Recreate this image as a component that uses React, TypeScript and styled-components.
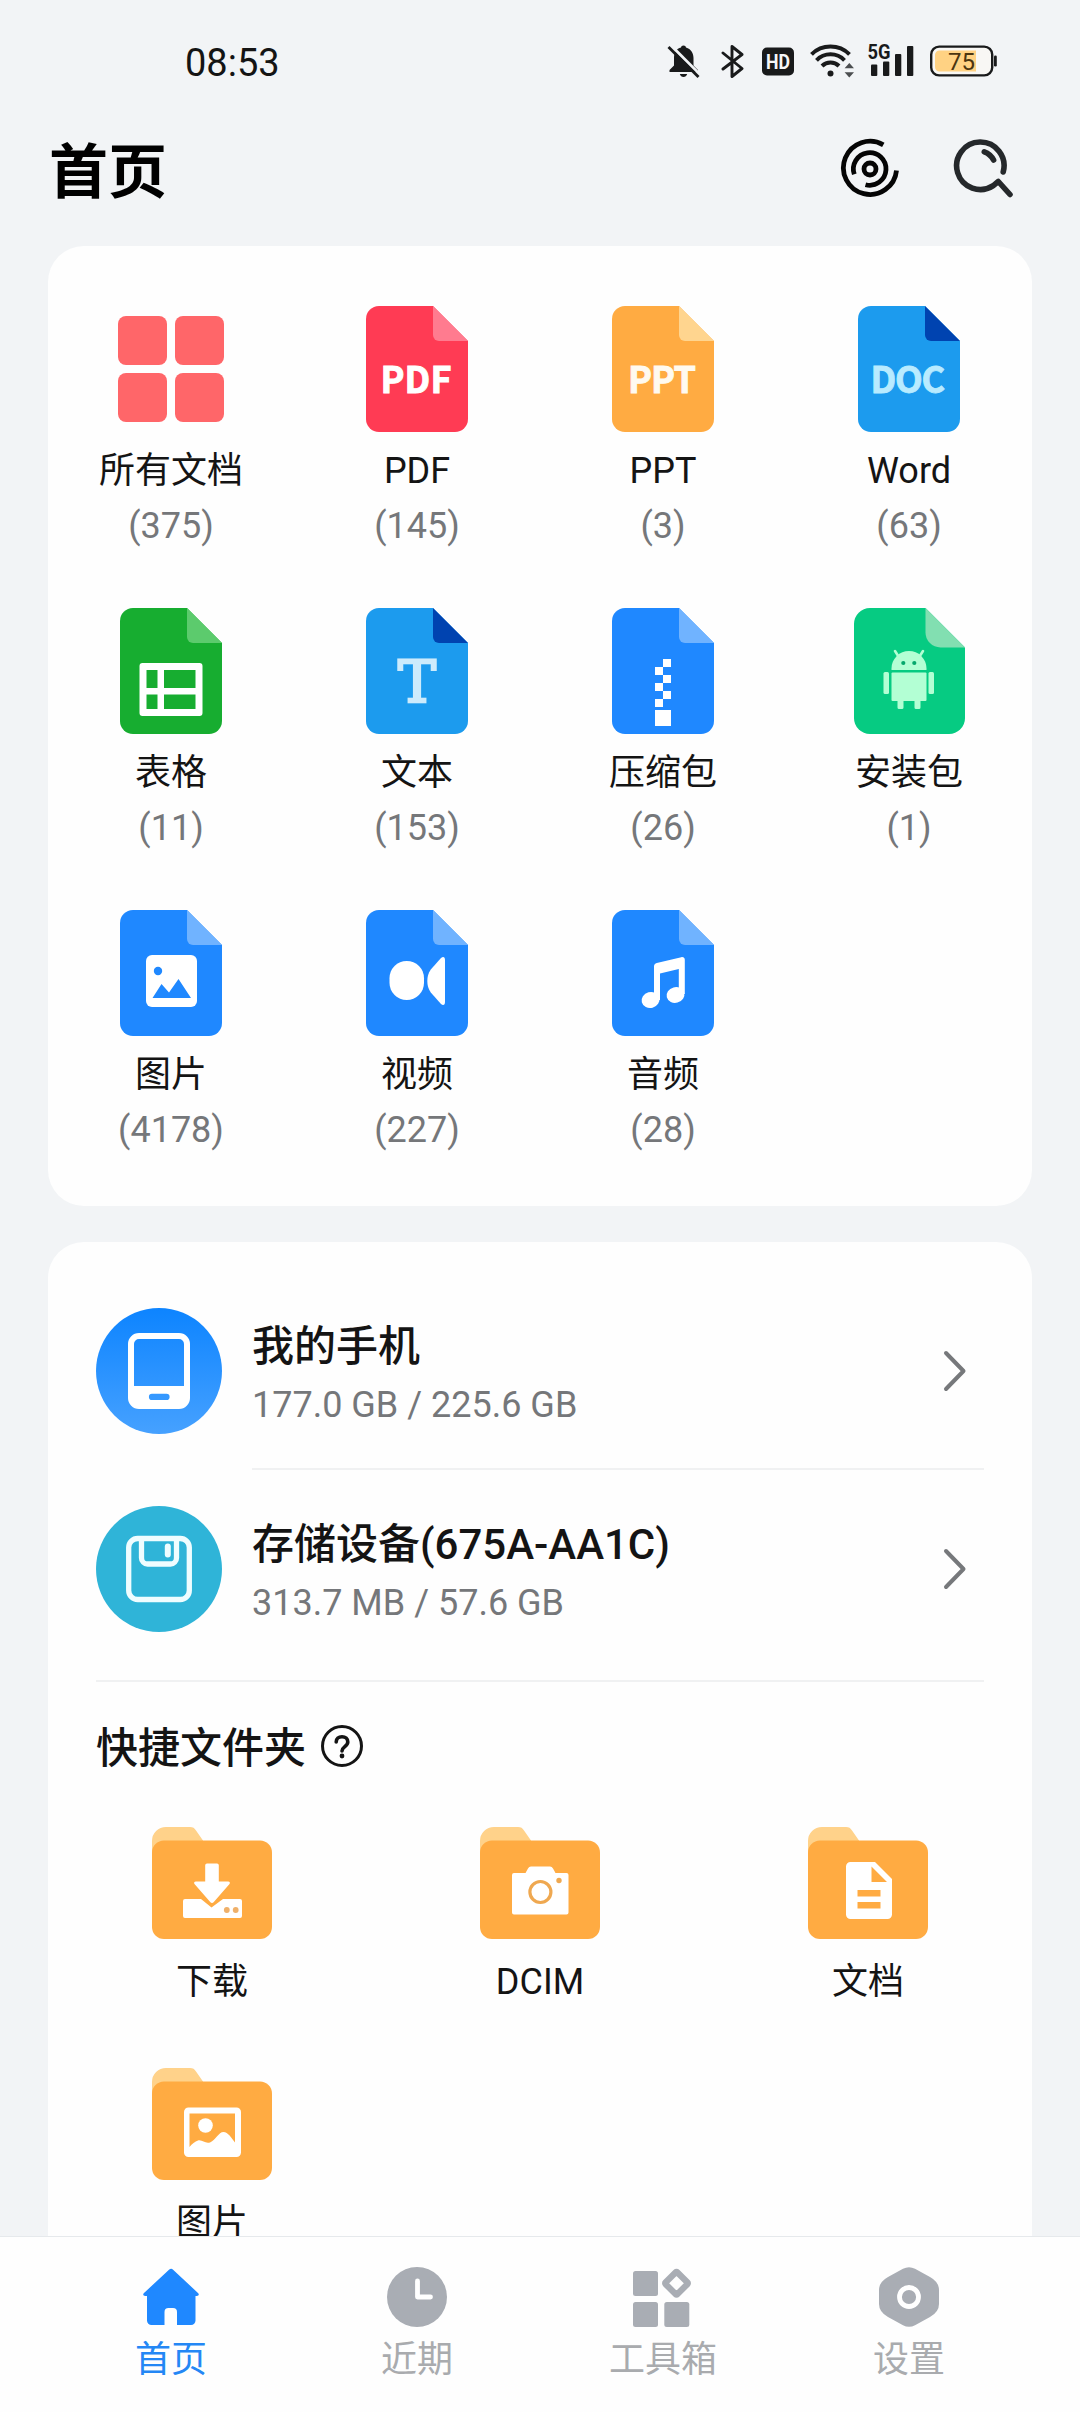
import React from 'react';
import styled, { createGlobalStyle } from 'styled-components';

const GlobalStyle = createGlobalStyle`
  * { box-sizing: border-box; }
  body {
    margin: 0;
    background: #f2f4f6;
    font-family: Roboto, "Noto Sans CJK SC", sans-serif;
    color: #141414;
  }
  svg { display: block; flex: none; }
`;

const CJK_SANS = '"Noto Sans CJK SC", sans-serif';

const Screen = styled.div`
  width: 1080px;
  height: 2412px;
  display: flex;
  flex-direction: column;
  overflow: hidden;
  background: #f2f4f6;
`;

const Content = styled.main`
  flex: 1;
  min-height: 0;
  overflow: hidden;
`;

const StatusBar = styled.div`
  height: 120px;
  display: flex;
  justify-content: space-between;
  align-items: center;
  padding: 0 82px 0 185px;
`;

const Clock = styled.span`
  font-size: 38px;
  line-height: 44px;
  padding-top: 5px;
`;

const StatusIcons = styled.div`
  display: flex;
  align-items: center;
  padding-top: 2px;
`;

const StatusIcon = styled.svg<{ $before?: number }>`
  margin-left: ${(p) => p.$before ?? 0}px;
`;

const Header = styled.header`
  height: 126px;
  display: flex;
  justify-content: space-between;
  align-items: flex-start;
  padding: 17px 67px 0 49px;
`;

const Title = styled.h1`
  margin: 0;
  padding-top: 2px;
  font-size: 59px;
  line-height: 68px;
  font-weight: 700;
  color: #000;
`;

const HeaderActions = styled.div`
  display: flex;
  gap: 51px;
  padding-top: 1px;
`;

const Card = styled.section`
  margin: 0 48px;
  background: #fefefe;
  border-radius: 36px;
`;

const CategoryCard = styled(Card)`
  height: 960px;
  padding-top: 60px;
  display: grid;
  grid-template-columns: repeat(4, 1fr);
  grid-auto-rows: 240px;
  row-gap: 62px;
`;

const Cell = styled.div`
  display: flex;
  flex-direction: column;
  align-items: center;
`;

const Label = styled.span<{ $gap?: number }>`
  margin-top: ${(p) => p.$gap ?? 18}px;
  font-size: 36px;
  line-height: 42px;
  white-space: nowrap;
`;

const Count = styled.span`
  margin-top: 13px;
  font-size: 36px;
  line-height: 42px;
  color: #75777a;
`;

const StorageCard = styled(Card)`
  margin-top: 36px;
  padding: 30px 48px 0;
  height: 1200px;
`;

const StorageRow = styled.div`
  height: 198px;
  display: flex;
  align-items: center;
  gap: 30px;
`;

const StorageBody = styled.div<{ $divided?: boolean }>`
  flex: 1;
  height: 198px;
  display: flex;
  align-items: center;
  justify-content: space-between;
  padding: 2px 16px 0 0;
  border-bottom: 2px solid ${(p) => (p.$divided ? '#f0f1f2' : 'transparent')};
`;

const StorageText = styled.div`
  display: flex;
  flex-direction: column;
  gap: 13px;
  padding-top: 6px;
`;

const StorageName = styled.span`
  font-size: 42px;
  line-height: 48px;
  font-weight: 500;
`;

const StorageSize = styled.span`
  font-size: 36px;
  line-height: 42px;
  color: #75777a;
`;

const Divider = styled.div`
  height: 2px;
  margin-top: 12px;
  background: #f0f1f2;
`;

const SectionTitle = styled.div`
  margin-top: 40px;
  height: 48px;
  display: flex;
  align-items: center;
  gap: 15px;
`;

const SectionName = styled.span`
  padding-top: 5px;
  font-size: 42px;
  line-height: 48px;
  font-weight: 500;
`;

const FolderGrid = styled.div`
  margin: 57px -48px 0;
  display: grid;
  grid-template-columns: repeat(3, 1fr);
  row-gap: 65px;
`;

const TabBar = styled.nav`
  height: 176px;
  border-top: 1px solid #e6e9ec;
  background: #fefefe;
  display: grid;
  grid-template-columns: repeat(4, 246px);
  justify-content: center;
  padding-top: 30px;
`;

const Tab = styled.div<{ $active?: boolean }>`
  display: flex;
  flex-direction: column;
  align-items: center;
  color: ${(p) => (p.$active ? '#2487f5' : '#a9abae')};
`;

/* ---------- file type icons ---------- */

type FileProps = { color: string; fold: string; children?: React.ReactNode };

const FileIcon = ({ color, fold, children }: FileProps) => (
  <svg width="102" height="126" viewBox="0 0 102 126">
    <path d="M13 0H67L102 35V113a13 13 0 0 1-13 13H13a13 13 0 0 1-13-13V13A13 13 0 0 1 13 0Z" fill={color} />
    <path d="M67 0L102 35H73a6 6 0 0 1-6-6Z" fill={fold} />
    {children}
  </svg>
);

const FileTag = styled.text`
  font-family: ${CJK_SANS};
  font-weight: 700;
  font-size: 36px;
  stroke: currentColor;
  stroke-width: 0.9px;
  fill: currentColor;
`;

const SlabLetter = styled.text`
  font-family: "DejaVu Serif", serif;
  font-size: 57px;
  text-anchor: middle;
`;

const TilesIcon = () => (
  <svg width="106" height="126" viewBox="0 0 106 126" fill="#ff6669">
    <rect x="0" y="10" width="49" height="49" rx="8" />
    <rect x="57" y="10" width="49" height="49" rx="8" />
    <rect x="0" y="67" width="49" height="49" rx="8" />
    <rect x="57" y="67" width="49" height="49" rx="8" />
  </svg>
);

const SheetIcon = () => (
  <FileIcon color="#17ad30" fold="#5ccb6d">
    <path
      fill="#fff"
      fillRule="evenodd"
      d="M22.500 55h57a3 3 0 0 1 3 3v47a3 3 0 0 1-3 3h-57a3 3 0 0 1-3-3V58a3 3 0 0 1 3-3ZM26.500 62v18H37.500V62ZM44 62v18H75.500V62ZM26.500 86.500v14.500H37.500V86.500ZM44 86.500v14.500H75.500V86.500Z"
    />
  </FileIcon>
);

const ZipIcon = () => (
  <FileIcon color="#1f88ff" fold="#70b3ff">
    <g fill="#fff">
      <rect x="51" y="51" width="8" height="8" />
      <rect x="43" y="59" width="8" height="8" />
      <rect x="51" y="67" width="8" height="8" />
      <rect x="43" y="75" width="8" height="8" />
      <rect x="51" y="83" width="8" height="8" />
      <rect x="43" y="91" width="8" height="8" />
      <rect x="43" y="102" width="16" height="16" />
    </g>
  </FileIcon>
);

const ApkIcon = () => (
  <svg width="111" height="126" viewBox="0 0 111 126">
    <path d="M16 0H71.500L111 39.500V110a16 16 0 0 1-16 16H16a16 16 0 0 1-16-16V16A16 16 0 0 1 16 0Z" fill="#06cb82" />
    <path d="M71.500 0L111 39.500H86.500a15 15 0 0 1-15-15Z" fill="#82dfb1" />
    <g fill="#b3ffd4">
      <path d="M37.500 62v-1.500a17.300 17.300 0 0 1 35 0V62Z" />
      <path d="M41 43l3.500 5.500M69 43l-3.500 5.500" stroke="#b3ffd4" strokeWidth="2.600" strokeLinecap="round" />
      <rect x="37.500" y="64.500" width="35" height="28.500" rx="1" />
      <rect x="29.500" y="64" width="5.500" height="22" rx="1.500" />
      <rect x="74.500" y="64" width="5.500" height="22" rx="1.500" />
      <path d="M43.500 92h6v7.500a1.500 1.500 0 0 1-1.500 1.500h-3a1.500 1.500 0 0 1-1.500-1.500ZM60.500 92h6v7.500a1.500 1.500 0 0 1-1.500 1.500h-3a1.500 1.500 0 0 1-1.500-1.500Z" />
    </g>
    <circle cx="49.300" cy="55" r="2.100" fill="#06a86c" />
    <circle cx="60.300" cy="55" r="2.100" fill="#06a86c" />
  </svg>
);

const PictureFileIcon = () => (
  <FileIcon color="#1f88ff" fold="#70b3ff">
    <rect x="26" y="45" width="51" height="52" rx="6" fill="#fff" />
    <circle cx="38" cy="61" r="4.200" fill="#1f88ff" />
    <path d="M32.500 88L41.500 74L49 82.500L58.500 69L71 88Z" fill="#1f88ff" />
  </FileIcon>
);

const VideoFileIcon = () => (
  <FileIcon color="#1f88ff" fold="#70b3ff">
    <rect x="23.500" y="51" width="34.500" height="39" rx="17.200" fill="#fff" />
    <path d="M79 50V92c0 3-1.800 3.800-4 2L64.800 82.500C62.300 79 61.300 75 61.300 71s1-8 3.500-11.500L75 48C77.200 46.200 79 47 79 50Z" fill="#fff" />
  </FileIcon>
);

const MusicFileIcon = () => (
  <FileIcon color="#1f88ff" fold="#70b3ff">
    <g fill="#fff">
      <path d="M42 56.500c0-1.800 1-3 2.800-3.500l24.500-5.800c2-.4 3.500.7 3.500 2.600V84h-6V59L48 63.500V90h-6Z" />
      <ellipse cx="38.500" cy="90" rx="9" ry="8" transform="rotate(-15 38.500 90)" />
      <ellipse cx="63.500" cy="85" rx="9" ry="7.800" transform="rotate(-15 63.500 85)" />
    </g>
  </FileIcon>
);

const PdfIcon = () => (
  <FileIcon color="#ff3b54" fold="#ff7b8f">
    <FileTag x="14.500" y="86.500" textLength="71" lengthAdjust="spacing" color="#fff">PDF</FileTag>
  </FileIcon>
);

const PptIcon = () => (
  <FileIcon color="#ffab42" fold="#ffd58f">
    <FileTag x="16" y="86.500" textLength="68" lengthAdjust="spacing" color="#fffaf0">PPT</FileTag>
  </FileIcon>
);

const DocIcon = () => (
  <FileIcon color="#1c9bee" fold="#0043b0">
    <FileTag x="12.500" y="86.500" textLength="74.500" lengthAdjust="spacing" color="#b8ebff">DOC</FileTag>
  </FileIcon>
);

const TextIcon = () => (
  <FileIcon color="#1c9bee" fold="#0043b0">
    <SlabLetter x="51" y="94" fill="#cdebfc" stroke="#cdebfc" strokeWidth="2.500">T</SlabLetter>
  </FileIcon>
);

const categories = [
  { icon: <TilesIcon />, name: '所有文档', count: 375 },
  { icon: <PdfIcon />, name: 'PDF', count: 145 },
  { icon: <PptIcon />, name: 'PPT', count: 3 },
  { icon: <DocIcon />, name: 'Word', count: 63 },
  { icon: <SheetIcon />, name: '表格', count: 11 },
  { icon: <TextIcon />, name: '文本', count: 153 },
  { icon: <ZipIcon />, name: '压缩包', count: 26 },
  { icon: <ApkIcon />, name: '安装包', count: 1 },
  { icon: <PictureFileIcon />, name: '图片', count: 4178 },
  { icon: <VideoFileIcon />, name: '视频', count: 227 },
  { icon: <MusicFileIcon />, name: '音频', count: 28 },
];

/* ---------- folders ---------- */

const FolderIcon = ({ children }: { children: React.ReactNode }) => (
  <svg width="120" height="112" viewBox="0 0 120 112">
    <path d="M0 30V14A14 14 0 0 1 14 0H38c3 0 4.500 1 6 3.500L51 13.500V30Z" fill="#ffd28a" />
    <rect x="0" y="13.500" width="120" height="98.500" rx="12" fill="#ffab42" />
    {children}
  </svg>
);

const DownloadFolder = () => (
  <FolderIcon>
    <path d="M33 72H49L59.500 80.500L71 72H88a2 2 0 0 1 2 2V89a2 2 0 0 1-2 2H33a2 2 0 0 1-2-2V74a2 2 0 0 1 2-2Z" fill="#fff" />
    <path
      d="M55 36.500H65a1.800 1.800 0 0 1 1.800 1.800V54.500H76c2 0 2.500 1.500 1.300 2.800L61.800 75c-1.100 1.300-2.500 1.300-3.600 0L42.700 57.300c-1.200-1.300-.7-2.800 1.300-2.800h9.200V38.300A1.800 1.800 0 0 1 55 36.500Z"
      fill="#fff"
      stroke="#ffab42"
      strokeWidth="3"
      paintOrder="stroke"
    />
    <circle cx="74.800" cy="83" r="2.900" fill="#efb069" />
    <circle cx="83.700" cy="83" r="2.900" fill="#efb069" />
  </FolderIcon>
);

const CameraFolder = () => (
  <FolderIcon>
    <path d="M34 46H45.500L48 41.500c.8-1.300 1.600-2 3-2H70c1.400 0 2.200.7 3 2L75.500 46H86.500a2 2 0 0 1 2 2V85.500a2 2 0 0 1-2 2H34a2 2 0 0 1-2-2V48a2 2 0 0 1 2-2Z" fill="#fff" />
    <circle cx="60.400" cy="65" r="10.500" fill="none" stroke="#efa850" strokeWidth="3.200" />
    <circle cx="79" cy="53.500" r="2.700" fill="#efa850" />
  </FolderIcon>
);

const DocumentFolder = () => (
  <FolderIcon>
    <path
      fill="#fff"
      fillRule="evenodd"
      d="M42.500 35H67L84 52V87.500a4.500 4.500 0 0 1-4.500 4.500h-37a4.500 4.500 0 0 1-4.500-4.500v-48a4.500 4.500 0 0 1 4.500-4.500ZM63.500 39.500V55H79ZM49.500 63v6.500h23V63ZM49.500 75v6.500h23V75Z"
    />
  </FolderIcon>
);

const PictureFolder = () => (
  <FolderIcon>
    <rect x="32" y="39.500" width="57" height="49.500" rx="4.500" fill="#fff" />
    <path d="M37.500 45.500H83V74.500C79.500 70 76 64 71.500 64C66.500 64 64 72 58 74.500C53 76 50.500 71.500 46 72.500C43 73.300 40 76 37.500 79Z" fill="#ffab42" />
    <circle cx="53.500" cy="57.500" r="7.300" fill="#fff" />
  </FolderIcon>
);

const folders = [
  { icon: <DownloadFolder />, name: '下载' },
  { icon: <CameraFolder />, name: 'DCIM' },
  { icon: <DocumentFolder />, name: '文档' },
  { icon: <PictureFolder />, name: '图片' },
];

/* ---------- storage icons ---------- */

const PhoneStorageIcon = () => (
  <svg width="126" height="126" viewBox="0 0 126 126">
    <defs>
      <linearGradient id="phoneBg" x1="0" y1="0" x2="0" y2="1">
        <stop offset="0" stopColor="#0d84ff" />
        <stop offset="1" stopColor="#46a1ff" />
      </linearGradient>
    </defs>
    <circle cx="63" cy="63" r="63" fill="url(#phoneBg)" />
    <rect x="35" y="28" width="56" height="70" rx="8" fill="none" stroke="#fff" strokeWidth="6" />
    <path
      fill="#fff"
      fillRule="evenodd"
      d="M35 78H91V92a8 8 0 0 1-8 8H43a8 8 0 0 1-8-8ZM56 85.800a3 3 0 0 0 0 6.200H70.500a3 3 0 0 0 0-6.200Z"
    />
  </svg>
);

const CardStorageIcon = () => (
  <svg width="126" height="126" viewBox="0 0 126 126">
    <circle cx="63" cy="63" r="63" fill="#2fb4d8" />
    <g fill="none" stroke="#effdff" strokeWidth="5.300">
      <rect x="32.700" y="32.500" width="60.600" height="61" rx="9" />
      <path d="M45.500 33V52a6 6 0 0 0 6 6H74.500a6 6 0 0 0 6-6V33" />
      <path d="M71.800 40.500V48.500" strokeWidth="6" strokeLinecap="round" />
    </g>
  </svg>
);

const Chevron = () => (
  <svg width="26" height="42" viewBox="0 0 26 42">
    <path d="M4 3L21.500 21L4 39" fill="none" stroke="#76787b" strokeWidth="4" strokeLinecap="round" strokeLinejoin="round" />
  </svg>
);

const devices = [
  { icon: <PhoneStorageIcon />, name: '我的手机', size: '177.0 GB / 225.6 GB' },
  { icon: <CardStorageIcon />, name: '存储设备(675A-AA1C)', size: '313.7 MB / 57.6 GB' },
];

const HelpIcon = () => (
  <svg width="42" height="42" viewBox="0 0 42 42">
    <circle cx="21" cy="21" r="19.500" fill="none" stroke="#141414" strokeWidth="3" />
    <path d="M15.200 17C15.200 13.800 17.600 11.800 21 11.800s5.800 2 5.800 5.200c0 4.500-5.800 4.800-5.800 9" fill="none" stroke="#141414" strokeWidth="3.600" strokeLinecap="round" />
    <circle cx="21" cy="31" r="2.400" fill="#141414" />
  </svg>
);

/* ---------- header and status icons ---------- */

const ScanIcon = () => (
  <svg width="60" height="62" viewBox="0 -1 60 62" fill="none" stroke="#050505" strokeWidth="4.800">
    <path d="M43.300 5.800A26.600 26.600 0 1 0 56.500 31.500" />
    <path d="M14.300 35.300A16.300 16.300 0 1 1 25.500 45.700" />
    <circle cx="30" cy="30" r="6" />
  </svg>
);

const SearchIcon = () => (
  <svg width="62" height="60" viewBox="0 0 62 60" fill="none" stroke="#25282b" strokeWidth="5.600" strokeLinecap="round" strokeLinejoin="round">
    <path d="M52.200 34A23.700 23.700 0 1 0 42.300 47.600L47.300 43.500L59 56.500" />
    <path d="M33.300 13.800Q39.500 16 42.600 22" />
  </svg>
);

const StatusText = styled.text<{ $size: number; $bold?: boolean }>`
  font-family: Roboto, sans-serif;
  font-size: ${(p) => p.$size}px;
  font-weight: ${(p) => (p.$bold ? 700 : 400)};
`;

const INK = '#191a1b';

const StatusGlyphs = () => (
  <StatusIcons>
    <StatusIcon width="33" height="36" viewBox="0 0 33 36">
      <path
        d="M16.500 2.500c1.500 0 2.300.7 2.500 2 5 1.500 7.500 5.500 7.500 10.500v7.500l4.500 4.500v2H2.500v-2L7 22.500V15C7 9.500 9.500 5.500 14 4.500c.2-1.300 1-2 2.500-2ZM12.800 31h7.400c-.6 2-1.900 3-3.700 3s-3.100-1-3.700-3Z"
        fill={INK}
      />
      <path d="M4 2.500L35 33.500" stroke="#f2f4f6" strokeWidth="3" />
      <path d="M1.500 4L31.500 34" stroke={INK} strokeWidth="2.800" />
    </StatusIcon>
    <StatusIcon $before={21} width="24" height="36" viewBox="0 0 24 36">
      <path d="M2 10L21 25.500L11 33.500V3.500L21 11.500L2 26" fill="none" stroke={INK} strokeWidth="2.900" strokeLinejoin="round" strokeLinecap="round" />
    </StatusIcon>
    <StatusIcon $before={17} width="32" height="36" viewBox="0 0 32 36">
      <rect x="0" y="4.500" width="32" height="28" rx="5" fill={INK} />
      <StatusText $size={21} $bold x="4" y="26" textLength="24" lengthAdjust="spacingAndGlyphs" fill="#f6f7f8">HD</StatusText>
    </StatusIcon>
    <StatusIcon $before={15} width="47" height="36" viewBox="0 0 47 36">
      <g fill="none" stroke={INK} strokeWidth="4">
        <path d="M2.500 11.300A27 27 0 0 1 40.500 11.300" />
        <path d="M7.500 17.300A19.500 19.500 0 0 1 35.500 17.300" />
        <path d="M13 23A12 12 0 0 1 30 23" />
      </g>
      <circle cx="21.500" cy="30.500" r="3" fill={INK} />
      <path d="M40.300 20L45 25.300H35.600ZM40.300 34.500L45 29.200H35.600Z" fill="#4c4e50" />
    </StatusIcon>
    <StatusIcon $before={11} width="47" height="44" viewBox="0 -4 47 44" fill={INK}>
      <StatusText $size={20} $bold x="0.500" y="16" textLength="23" lengthAdjust="spacingAndGlyphs">5G</StatusText>
      <rect x="4" y="21.500" width="6.300" height="11.500" rx="1" />
      <rect x="16" y="18.500" width="6.300" height="14.500" rx="1" />
      <rect x="28" y="11" width="6.300" height="22" rx="1" />
      <rect x="40" y="3" width="6.300" height="30" rx="1" />
    </StatusIcon>
    <StatusIcon $before={16} width="68" height="36" viewBox="0 0 68 36">
      <rect x="1.200" y="3.600" width="61" height="28.800" rx="8" fill="#f8f7f4" stroke={INK} strokeWidth="2.400" />
      <path d="M9.500 7.500H46V28.500H9.500A4.500 4.500 0 0 1 5 24V12A4.500 4.500 0 0 1 9.500 7.500Z" fill="#ffd283" />
      <rect x="64" y="12.500" width="2.800" height="11" rx="1.300" fill={INK} />
      <StatusText $size={24} x="18" y="26.500" fill="#4b3510">75</StatusText>
    </StatusIcon>
  </StatusIcons>
);

/* ---------- tab bar icons ---------- */

const HomeTabIcon = () => (
  <svg width="60" height="60" viewBox="0 0 60 60" fill="#1f88ff">
    <path d="M28 2.700c1.400-1.200 2.800-1.200 4.100 0L57 26c1.500 1.600.7 3-1.200 3H54.500V53.500a4.500 4.500 0 0 1-4.500 4.500H36V45a4 4 0 0 0-4-4H27.500a4 4 0 0 0-4 4V58H10.500A4.500 4.500 0 0 1 6 53.500V29H4.200c-1.900 0-2.700-1.400-1.200-3Z" />
  </svg>
);

const RecentTabIcon = () => (
  <svg width="60" height="60" viewBox="0 0 60 60">
    <circle cx="30" cy="30" r="30" fill="#a9adb4" />
    <path d="M30.500 14V30H43.500" fill="none" stroke="#fff" strokeWidth="4.800" strokeLinecap="round" strokeLinejoin="round" />
  </svg>
);

const ToolsTabIcon = () => (
  <svg width="60" height="60" viewBox="0 0 60 60" fill="#a9adb4">
    <rect x="0" y="4" width="25" height="25" rx="2.500" />
    <rect x="0" y="35" width="25" height="25" rx="2.500" />
    <rect x="31.300" y="35" width="25" height="25" rx="2.500" />
    <rect x="35.200" y="8" width="16.600" height="16.600" rx="1" transform="rotate(45 43.500 16.300)" fill="none" stroke="#a9adb4" strokeWidth="6.300" strokeLinejoin="round" />
  </svg>
);

const SettingsTabIcon = () => (
  <svg width="60" height="60" viewBox="0 0 60 60">
    <path d="M24 1.800Q30-1.500 36 1.800L51 10Q60 15 60 23V37Q60 45 51 50L36 58.200Q30 61.500 24 58.200L9 50Q0 45 0 37V23Q0 15 9 10Z" fill="#a9adb4" />
    <circle cx="30" cy="30" r="9.500" fill="none" stroke="#fff" strokeWidth="4.800" />
  </svg>
);

const tabs = [
  { icon: <HomeTabIcon />, name: '首页' },
  { icon: <RecentTabIcon />, name: '近期' },
  { icon: <ToolsTabIcon />, name: '工具箱' },
  { icon: <SettingsTabIcon />, name: '设置' },
];

export default function App() {
  return (
    <Screen>
      <GlobalStyle />
      <Content>
        <StatusBar>
          <Clock>08:53</Clock>
          <StatusGlyphs />
        </StatusBar>
        <Header>
          <Title>首页</Title>
          <HeaderActions>
            <ScanIcon />
            <SearchIcon />
          </HeaderActions>
        </Header>
        <CategoryCard>
          {categories.map((c) => (
            <Cell key={c.name}>
              {c.icon}
              <Label>{c.name}</Label>
              <Count>({c.count})</Count>
            </Cell>
          ))}
        </CategoryCard>
        <StorageCard>
          {devices.map((d, i) => (
            <StorageRow key={d.name}>
              {d.icon}
              <StorageBody $divided={i < devices.length - 1}>
                <StorageText>
                  <StorageName>{d.name}</StorageName>
                  <StorageSize>{d.size}</StorageSize>
                </StorageText>
                <Chevron />
              </StorageBody>
            </StorageRow>
          ))}
          <Divider />
          <SectionTitle>
            <SectionName>快捷文件夹</SectionName>
            <HelpIcon />
          </SectionTitle>
          <FolderGrid>
            {folders.map((f) => (
              <Cell key={f.name}>
                {f.icon}
                <Label $gap={22}>{f.name}</Label>
              </Cell>
            ))}
          </FolderGrid>
        </StorageCard>
      </Content>
      <TabBar>
        {tabs.map((t, i) => (
          <Tab key={t.name} $active={i === 0}>
            {t.icon}
            <Label $gap={12}>{t.name}</Label>
          </Tab>
        ))}
      </TabBar>
    </Screen>
  );
}
